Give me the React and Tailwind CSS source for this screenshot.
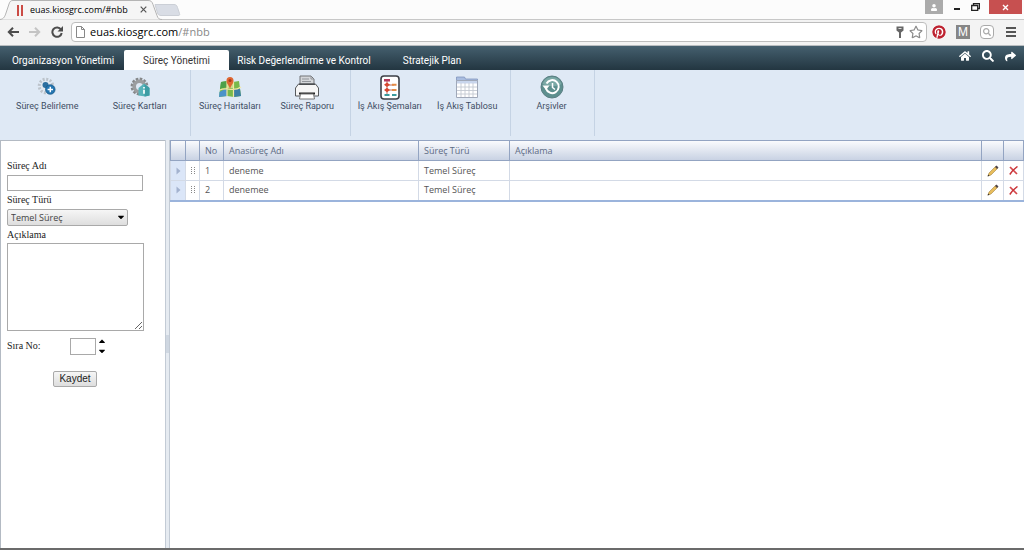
import { useState } from "react";
import { FaHome, FaSearch, FaShare, FaPinterest, FaRegStar, FaUser, FaCaretDown, FaCaretUp } from "react-icons/fa";

const menus = [
    { title: "Organizasyon Yönetimi", className: "w-[124px] pl-0.5" },
    { title: "Süreç Yönetimi", className: "w-[105px]" },
    { title: "Risk Değerlendirme ve Kontrol", className: "w-[150px]" },
    { title: "Stratejik Plan", className: "w-[106px]" },
];

const rows = [
    { no: 1, name: "deneme", type: "Temel Süreç", description: "" },
    { no: 2, name: "denemee", type: "Temel Süreç", description: "" },
];

function AddIcon() {
    return (
        <svg viewBox="0 0 20 20" className="w-5 h-5">
            <circle cx="9" cy="9" r="6.8" fill="none" stroke="#bcc3ca" strokeWidth="3" strokeDasharray="2 1.56" />
            <circle cx="9" cy="9" r="5" fill="#e3e8ee" />
            <circle cx="8.5" cy="8" r="3" fill="#2d6f9f" />
            <circle cx="13.3" cy="12.5" r="4.8" fill="#2375b1" stroke="#175683" strokeWidth=".7" />
            <path d="M13.3 9.8v5.4M10.6 12.5H16" stroke="#fff" strokeWidth="1.5" />
        </svg>
    );
}

function CardIcon() {
    return (
        <svg viewBox="0 0 20 20" className="w-5 h-5">
            <circle cx="9.5" cy="9.5" r="7.6" fill="none" stroke="#858789" strokeWidth="2.6" strokeDasharray="2.6 1.375" />
            <circle cx="9.5" cy="9.5" r="5.3" fill="none" stroke="#9b9d9f" strokeWidth="3.6" />
            <path d="M8.5 11l5.5-4.5 5.5 4.5v7.5l-4 1-7-1z" fill="#58b3b9" />
            <path d="M14.5 7v12.5l5-1V11z" fill="#3c9ca4" />
            <path d="M14 10v1.5M14 12.8v4" stroke="#fff" strokeWidth="1.7" />
        </svg>
    );
}

function MapIcon() {
    return (
        <svg viewBox="0 0 24 22" className="w-6 h-[22px]">
            <path d="M3 6l6-1 6 1 6-1 2 15-7 1-7-1-8 1z" fill="#78b94b" />
            <path d="M3 6l6-1v6l-7 2z" fill="#4da04a" />
            <path d="M9 5l6 1v6H9z" fill="#c9dc8b" />
            <path d="M1.5 16L9 12v8l-8 1z" fill="#4a93c9" />
            <path d="M16 13l6 0 1 7-7 1z" fill="#3c7fa6" />
            <path d="M2 14c6-4 13 3 21-3M9 5v15M15.5 6v15" fill="none" stroke="#f1e7a4" strokeWidth="1.2" />
            <path d="M12 13C11 9 8.5 8 8.5 4.5a3.5 3.5 0 0 1 7 0C15.5 8 13 9 12 13z" fill="#df6732" />
            <circle cx="12" cy="4.5" r="1.5" fill="#a8391b" />
        </svg>
    );
}

function PrinterIcon() {
    return (
        <svg viewBox="0 0 24 25" className="w-6 h-[25px]">
            <path d="M5 10V1h11l3 3v6z" fill="#d4d6d9" stroke="#707376" strokeWidth="1" />
            <path d="M7 4h7M7 6.5h9M16 1v3h3" fill="none" stroke="#92959a" strokeWidth="1" />
            <path d="M3.5 9h17l3 4v8H.5v-8z" fill="#f6f6f6" stroke="#56595c" strokeWidth="1" />
            <path d="M4.5 8.5h15l.8 1.5H3.7z" fill="#4b4e51" />
            <path d="M4 18.5h16" stroke="#222" strokeWidth="2" />
            <path d="M5.5 19h13l1 5h-15z" fill="#fff" stroke="#777" strokeWidth="1" />
        </svg>
    );
}

function FlowIcon() {
    return (
        <svg viewBox="0 0 20 25" className="w-5 h-[25px]">
            <rect x="1" y="1" width="18" height="23" rx="3" fill="#fff" stroke="#3d4047" strokeWidth="1.6" />
            <path d="M7 5v15M7 10h7M7 15h7" stroke="#b76b5d" strokeWidth="1" />
            <path d="M4 4h6v2.5H4z" fill="#b3395c" />
            <path d="M7 7.5l3 2.3-3 2.3-3-2.3zM7 12.7l3 2.3-3 2.3-3-2.3z" fill="#d9482f" />
            <path d="M12 8.8h4.5v2H12zM12 14h4.5v2H12z" fill="#e58b45" />
            <path d="M4.5 19h5v2h-5zM12 19h4.5v2H12z" fill="#3a9a9c" />
        </svg>
    );
}

function TableIcon() {
    return (
        <svg viewBox="0 0 24 24" className="w-6 h-6">
            <path d="M1.5 5V2h8l1 2h12v2h-21z" fill="#a9bde0" stroke="#8094bd" strokeWidth=".8" />
            <path d="M1.5 5.5h21v17h-21z" fill="#fff" stroke="#a0a8b8" strokeWidth="1" />
            <path d="M2 6h20v2.5H2z" fill="#c8d5ec" />
            <path d="M2 12h20M2 15.5h20M2 19h20M6 8v14M10 8v14M14 8v14M18 8v14" stroke="#c3c8d1" strokeWidth=".9" />
        </svg>
    );
}

function ArchiveIcon() {
    return (
        <svg viewBox="0 0 24 24" className="w-6 h-6">
            <circle cx="12" cy="12" r="11" fill="#5d8f8e" stroke="#5b7f83" strokeWidth="1" />
            <path d="M2.5 9a9.9 9.9 0 0 1 19 0c-5 3-13 3-19 0z" fill="#7ba9a6" />
            <path d="M6 13.5a6.5 6.5 0 1 0 .5-5" fill="none" stroke="#fff" strokeWidth="2" />
            <path d="M2.5 10.5h7L6 15z" fill="#fff" />
            <path d="M12.5 8v4.5l2.5 2" fill="none" stroke="#fff" strokeWidth="1.5" />
        </svg>
    );
}

const groups = [
    { className: "w-[191px] pl-px pr-1", items: [{ title: "Süreç Belirleme", icon: <AddIcon /> }, { title: "Süreç Kartları", icon: <CardIcon /> }] },
    { className: "w-40 pr-1", items: [{ title: "Süreç Haritaları", icon: <MapIcon /> }, { title: "Süreç Raporu", icon: <PrinterIcon /> }] },
    { className: "w-40 pr-1", items: [{ title: "İş Akış Şemaları", icon: <FlowIcon /> }, { title: "İş Akış Tablosu", icon: <TableIcon /> }] },
    { className: "w-[84px] pr-0.5", items: [{ title: "Arşivler", icon: <ArchiveIcon /> }] },
];

function Browser() {
    return (
        <header className="bg-[#fcfcfc] text-[#333]">
            <div className="h-[19px] flex justify-between">
                <div className="relative w-[166px] h-5 flex items-center pl-[17px]">
                    <svg viewBox="0 0 182 20" className="absolute left-0 top-0 w-[182px] h-5">
                        <path d="M0 19.5C4 19 5 16 6 13L9 4c1-3 2-3.5 4-3.5h135c3 0 4 1 5 4l4 11c1 3 2 4 5 4" fill="#f5f5f5" stroke="#b4b4b4" />
                        <path d="M155 4.5h19c2 0 3 1 3.5 3l2 6c.5 1.5 0 2-1.5 2h-17c-2 0-3-1-3.5-2.5z" fill="#d9dde5" stroke="#cbcfd6" />
                    </svg>
                    <span className="relative w-[6px] h-[11px] border-x-2 border-[#cb4b45]"></span>
                    <span className="relative ml-[7px] text-[9px] text-black">euas.kiosgrc.com/#nbb</span>
                    <button aria-label="Sekmeyi kapat" className="absolute left-[140px] top-[6px]">
                        <svg viewBox="0 0 7 7" className="w-[7px] h-[7px]"><path d="M.7.7l5.6 5.6M6.3.7L.7 6.3" stroke="#555" strokeWidth="1.2" /></svg>
                    </button>
                </div>
                <div className="flex h-[14px]">
                    <button aria-label="Profil" className="w-[18px] bg-[#ababab] flex items-center justify-center text-white"><FaUser className="w-[6px] h-[7px]" /></button>
                    <button aria-label="Küçült" className="w-7 flex items-center justify-center"><span className="w-[6px] h-[2px] bg-[#222] mt-1"></span></button>
                    <button aria-label="Geri yükle" className="w-[18px] flex items-center justify-start">
                        <svg viewBox="0 0 9 8" className="w-[9px] h-2"><path d="M2.5 2V.5h6v5H7M.7 2.5h6v5h-6z" fill="none" stroke="#222" strokeWidth="1.3" /></svg>
                    </button>
                    <button aria-label="Kapat" className="w-[33px] mr-0.5 bg-[#c75050] flex items-center justify-center">
                        <svg viewBox="0 0 7 7" className="w-[7px] h-[7px]"><path d="M1 1l5 5M6 1L1 6" stroke="#fff" strokeWidth="1.4" /></svg>
                    </button>
                </div>
            </div>
            <div className="h-[27px] flex items-center bg-[#f3f3f3] border-t border-[#c8c8c8] border-b border-b-[#b9bdc0] pb-px px-[7px]">
                <button aria-label="Geri" className="mr-[10px]">
                    <svg viewBox="0 0 12 10" className="w-3 h-[10px]"><path d="M12 5H2M6 .8L1.8 5 6 9.2" fill="none" stroke="#4d4d4d" strokeWidth="2" /></svg>
                </button>
                <button aria-label="İleri" className="mr-[10px]">
                    <svg viewBox="0 0 12 10" className="w-3 h-[10px]"><path d="M0 5h10M6 .8L10.2 5 6 9.2" fill="none" stroke="#c4c4c4" strokeWidth="2" /></svg>
                </button>
                <button aria-label="Yenile" className="mr-2">
                    <svg viewBox="0 0 12 12" className="w-3 h-3"><path d="M10 3.5A4.7 4.7 0 1 0 10.7 7" fill="none" stroke="#4d4d4d" strokeWidth="2" /><path d="M12 0v5.5H6.5z" fill="#4d4d4d" /></svg>
                </button>
                <div className="flex-1 h-[20px] flex items-center bg-white border border-[#bdbdbd] rounded-sm pl-1">
                    <svg viewBox="0 0 9 12" className="w-[9px] h-3"><path d="M.5.5h5l3 3v8h-8zM5.5.5v3h3" fill="#fff" stroke="#888" /></svg>
                    <span className="flex-1 ml-[5px] text-[11px] leading-4 text-black">euas.kiosgrc.com<span className="text-[#888]">/#nbb</span></span>
                    <svg viewBox="0 0 8 12" className="w-2 h-3 mr-[5px]"><path d="M.5.5h7v4L5 6.5V12H3V6.5L.5 4.5z" fill="#666" /><path d="M2.5 2.5h3" stroke="#ddd" /></svg>
                    <FaRegStar className="w-[14px] h-[14px] mr-[3px] text-[#8a8a8a]" />
                </div>
                <FaPinterest className="w-[14px] h-[14px] ml-[5px] text-[#bd2230] bg-white rounded-full" />
                <span className="w-[14px] h-[14px] ml-[10px] bg-[#868686] text-white text-[12px] leading-[14px] text-center font-['Liberation_Sans',sans-serif]">M</span>
                <span className="w-[14px] h-[14px] ml-[10px] rounded-sm border border-[#aaa] bg-white flex items-center justify-center text-[#aaa]"><FaSearch className="w-2 h-2" /></span>
                <button aria-label="Menü" className="w-[10px] h-[10px] ml-3 mr-px flex flex-col justify-between">
                    <span className="h-[2px] w-full bg-[#555]"></span>
                    <span className="h-[2px] w-full bg-[#555]"></span>
                    <span className="h-[2px] w-full bg-[#555]"></span>
                </button>
            </div>
        </header>
    );
}

function ProcessForm() {
    return (
        <form onSubmit={(e) => e.preventDefault()} className="w-[165px] shrink-0 bg-white border-l border-t border-[#b3bac3] pl-[6px] pt-[17px] flex flex-col items-start font-['Liberation_Serif',serif] text-[10px] leading-4 text-[#222]">
            <label htmlFor="name">Süreç Adı</label>
            <input id="name" className="mt-px w-[136px] h-4 border border-[#a9a9a9] px-1" />
            <label htmlFor="type" className="mt-px">Süreç Türü</label>
            <div className="relative mt-px w-[121px] h-[17px] font-['Open_Sans',sans-serif]">
                <select id="type" defaultValue="Temel Süreç" className="appearance-none w-full h-full border border-[#a9a9a9] rounded-xs bg-linear-to-b from-[#f6f6f6] to-[#dedede] pl-[3px] text-[9px] leading-[15px] text-[#444]">
                    <option>Temel Süreç</option>
                </select>
                <FaCaretDown className="absolute right-[2px] top-[3px] w-[10px] h-[10px] text-black pointer-events-none" />
            </div>
            <label htmlFor="description" className="mt-px">Açıklama</label>
            <textarea id="description" className="w-[137px] h-[88px] border border-[#a9a9a9] p-0.5 resize" />
            <div className="mt-[5px] flex items-center">
                <label htmlFor="order" className="w-[63px]">Sıra No:</label>
                <input id="order" className="w-[26px] h-[17px] border border-[#a9a9a9] px-1" />
                <div className="ml-px flex flex-col text-black">
                    <button type="button" aria-label="Artır"><FaCaretUp className="w-2.5 h-2.5" /></button>
                    <button type="button" aria-label="Azalt"><FaCaretDown className="w-2.5 h-2.5" /></button>
                </div>
            </div>
            <button className="mt-[15px] ml-[46px] w-11 h-4 border border-[#a9a9a9] rounded-xs bg-linear-to-b from-[#f6f6f6] to-[#dedede] font-['Liberation_Sans',sans-serif] leading-[14px]">Kaydet</button>
        </form>
    );
}

function ProcessTable() {
    return (
        <table className="w-full table-fixed border-collapse border-b-2 border-[#9bb4dc] text-[9px] leading-[18px] text-[#555] text-left">
            <thead>
                <tr className="h-5 bg-linear-to-b from-[#fafbfd] to-[#c6d0e2] text-[#5d6b84] *:border *:border-[#93a4c2] *:font-normal *:px-[5px] *:py-0">
                    <th className="w-[15px]"></th>
                    <th className="w-[14px]"></th>
                    <th className="w-6">No</th>
                    <th className="w-[195px]">Anasüreç Adı</th>
                    <th className="w-[91px]">Süreç Türü</th>
                    <th>Açıklama</th>
                    <th className="w-[22px]"></th>
                    <th className="w-5"></th>
                </tr>
            </thead>
            <tbody>
                {rows.map(row => (
                    <tr key={row.no} className="bg-white *:h-5 *:border-x *:border-t *:border-[#d3dae6] *:px-[5px] *:py-0">
                        <td className="bg-[#dbe6f8]">
                            <svg viewBox="0 0 5 8" className="w-[5px] h-2"><path d="M.5.5L4.5 4 .5 7.5z" fill="#a3b2cf" /></svg>
                        </td>
                        <td>
                            <svg viewBox="0 0 4 8" className="w-1 h-2"><path d="M.5 0v8M3.5 0v8" stroke="#888" strokeDasharray="1 1" /></svg>
                        </td>
                        <td>{row.no}</td>
                        <td>{row.name}</td>
                        <td>{row.type}</td>
                        <td>{row.description}</td>
                        <td>
                            <button aria-label="Düzenle" className="block">
                                <svg viewBox="0 0 12 12" className="w-3 h-3">
                                    <path d="M1 11l1-3L8.5 1.5l2 2L4 10z" fill="#e8bd5c" stroke="#a58445" strokeWidth=".6" />
                                    <path d="M8 2l1.5-1.5 2 2L10 4z" fill="#4e4449" />
                                    <path d="M.5 11.5l.8-2L2.5 10.7z" fill="#332d28" />
                                </svg>
                            </button>
                        </td>
                        <td>
                            <button aria-label="Sil" className="block">
                                <svg viewBox="0 0 9 9" className="w-[9px] h-[9px]"><path d="M1 1c2 2 4 4 7 7" fill="none" stroke="#d4474a" strokeWidth="1.7" /><path d="M8.5.5C5 3 3 5 .8 8.5" fill="none" stroke="#c93539" strokeWidth="1.5" /></svg>
                            </button>
                        </td>
                    </tr>
                ))}
            </tbody>
        </table>
    );
}

function App() {
    const [active, setActive] = useState("Süreç Yönetimi");

    return (
        <div className="w-full h-screen flex flex-col overflow-hidden bg-[#dfe9f5] border-b-2 border-[#6b6b6b] font-['Open_Sans',sans-serif]">
            <Browser />

            <nav className="h-6 shrink-0 flex items-end justify-between bg-linear-to-b from-[#45606f] to-[#233641]">
                <div className="flex font-['Roboto',sans-serif]">
                    {menus.map(menu => (
                        <button
                            key={menu.title}
                            onClick={() => setActive(menu.title)}
                            className={`${menu.className} h-5 text-[10px] whitespace-nowrap ${active === menu.title ? "bg-white text-[#333] rounded-t-xs" : "text-white"}`}
                        >
                            {menu.title}
                        </button>
                    ))}
                </div>
                <div className="h-full flex items-center gap-[11px] pr-2 pb-1 text-white">
                    <a href="#home" aria-label="Ana sayfa"><FaHome className="w-3 h-3" /></a>
                    <a href="#search" aria-label="Ara"><FaSearch className="w-3 h-3" /></a>
                    <a href="#share" aria-label="Çıkış"><FaShare className="w-[11px] h-[11px]" /></a>
                </div>
            </nav>

            <section className="h-[70px] shrink-0 flex items-start pb-1">
                {groups.map((group, i) => (
                    <div key={i} className={`${group.className} h-full flex border-r border-[#c5d3e4]`}>
                        {group.items.map(item => (
                            <button key={item.title} className="flex-1 h-[42px] flex flex-col items-center text-[#3e4d63]">
                                <span className="h-[30px] pt-1 flex items-center justify-center">{item.icon}</span>
                                <span className="font-['Roboto',sans-serif] text-[9px] leading-3 whitespace-nowrap">{item.title}</span>
                            </button>
                        ))}
                    </div>
                ))}
            </section>

            <main className="flex-1 min-h-0 flex">
                <ProcessForm />
                <div className="w-[5px] shrink-0 bg-[#e6ebf1] border-x border-[#c3cbd5] flex items-center">
                    <span className="w-full h-[18px] bg-[#cfd7e1]"></span>
                </div>
                <section className="flex-1 bg-white">
                    <ProcessTable />
                </section>
            </main>
        </div>
    );
}

export default App;
